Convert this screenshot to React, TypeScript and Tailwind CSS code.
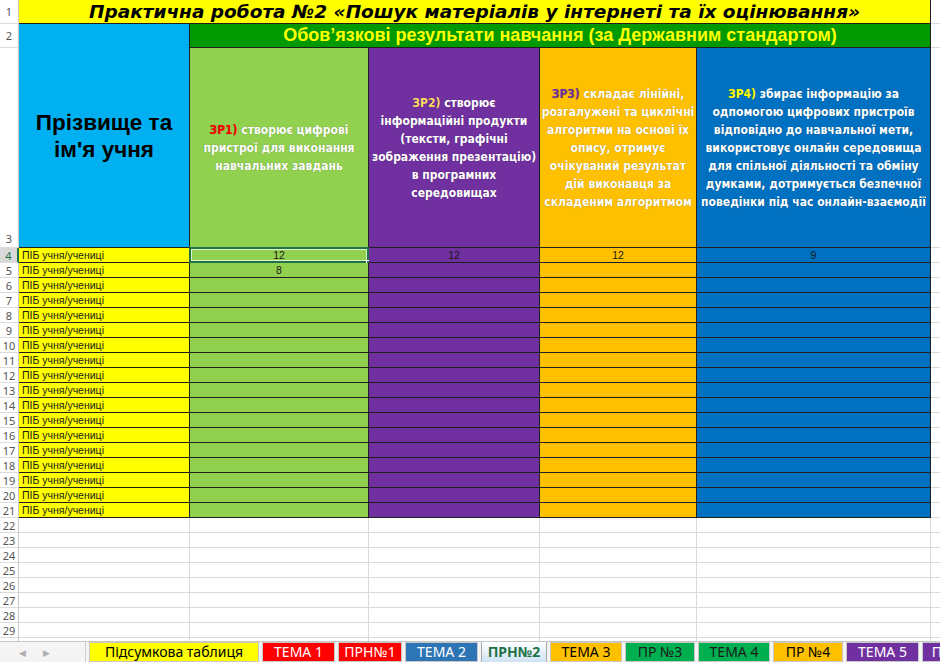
import React from "react";

type Head = {
  tag: string;
  tagColor: string;
  first: string;
  rest: string[];
  bg: string;
};

const heads: Head[] = [
  {
    tag: "ЗР1)",
    tagColor: "text-[#ff0000]",
    first: "створює цифрові",
    rest: ["пристрої для виконання", "навчальних завдань"],
    bg: "bg-[#92d050]",
  },
  {
    tag: "ЗР2)",
    tagColor: "text-[#ffd966]",
    first: "створює",
    rest: [
      "інформаційні продукти",
      "(тексти, графічні",
      "зображення презентацію)",
      "в програмних",
      "середовищах",
    ],
    bg: "bg-[#7030a0]",
  },
  {
    tag: "ЗР3)",
    tagColor: "text-[#7030a0]",
    first: "складає лінійні,",
    rest: [
      "розгалужені та циклічні",
      "алгоритми на основі їх",
      "опису, отримує",
      "очікуваний результат",
      "дій виконавця за",
      "складеним алгоритмом",
    ],
    bg: "bg-[#ffc000]",
  },
  {
    tag: "ЗР4)",
    tagColor: "text-[#ffff00]",
    first: "збирає інформацію за",
    rest: [
      "одпомогою цифрових пристроїв",
      "відповідно до навчальної мети,",
      "використовує онлайн середовища",
      "для спільної діяльності та обміну",
      "думками, дотримується безпечної",
      "поведінки під час онлайн-взаємодії",
    ],
    bg: "bg-[#0070c0]",
  },
];

const dataCols = [
  "bg-[#92d050]",
  "bg-[#7030a0]",
  "bg-[#ffc000]",
  "bg-[#0070c0]",
];

const scores: Record<number, string[]> = {
  4: ["12", "12", "12", "9"],
  5: ["8", "", "", ""],
};

const tabs = [
  { label: "Підсумкова таблиця", w: "w-[170px]", cls: "bg-[#ffff00] text-black" },
  { label: "ТЕМА 1", w: "w-[73px]", cls: "bg-[#ff0000] text-white" },
  { label: "ПРН№1", w: "w-[64px]", cls: "bg-[#ff0000] text-white" },
  { label: "ТЕМА 2", w: "w-[73px]", cls: "bg-[#2e75b6] text-white" },
  { label: "ПРН№2", w: "w-[66px]", cls: "active" },
  { label: "ТЕМА 3", w: "w-[72px]", cls: "bg-[#ffc000] text-black" },
  { label: "ПР №3", w: "w-[70px]", cls: "bg-[#00b050] text-[#1a1a1a]" },
  { label: "ТЕМА 4", w: "w-[72px]", cls: "bg-[#00b050] text-[#1a1a1a]" },
  { label: "ПР №4", w: "w-[70px]", cls: "bg-[#ffc000] text-black" },
  { label: "ТЕМА 5", w: "w-[73px]", cls: "bg-[#7030a0] text-white" },
  { label: "П", w: "w-[30px]", cls: "bg-[#7030a0] text-white" },
];

function RowHead({ n, bottom, selected }: { n: number | string; bottom?: boolean; selected?: boolean }) {
  return (
    <div
      className={`flex justify-center border-b border-[#dcdcdc] font-['Noto_Sans',sans-serif] text-[11px] leading-none ${
        bottom ? "items-end pb-[3px]" : "items-center"
      } ${
        selected
          ? "bg-[#d9d9d9] text-[#217346] border-r-2 border-r-[#217346]"
          : "bg-white text-[#555555] border-r border-r-[#c8c8c8]"
      }`}
    >
      {n}
    </div>
  );
}

function HeaderCell({ h }: { h: Head }) {
  return (
    <div
      className={`${h.bg} flex flex-col items-center justify-center border-r border-b border-[#1f1f1f] font-['DejaVu_Sans_Condensed','DejaVu_Sans',sans-serif] [font-stretch:condensed] font-bold text-[12px] leading-[18px] text-white text-center whitespace-nowrap [text-shadow:0_0_1px_rgba(0,0,0,0.35)]`}
    >
      <div>
        <span className={h.tagColor}>{h.tag}</span> {h.first}
      </div>
      {h.rest.map((l) => (
        <div key={l}>{l}</div>
      ))}
    </div>
  );
}

export default function App() {
  const dataRows = Array.from({ length: 18 }, (_, i) => i + 4);
  const emptyRows = Array.from({ length: 8 }, (_, i) => i + 22);

  return (
    <div className="w-[940px] h-[662px] flex flex-col bg-white overflow-hidden">
      <div className="flex-1 min-h-0 grid grid-cols-[19px_171px_179px_171px_157px_234px_1fr] grid-rows-[24px_24px_200px_repeat(26,15px)_1fr] overflow-hidden">
        {/* row 1: title */}
        <RowHead n={1} />
        <div className="col-span-5 bg-[#ffff00] border-r border-b border-[#1f1f1f] flex items-center justify-center font-['DejaVu_Sans',sans-serif] font-bold italic text-[18.5px] text-black whitespace-nowrap">
          Практична робота №2 «Пошук матеріалів у інтернеті та їх оцінювання»
        </div>
        <div className="border-b border-[#dcdcdc]" />

        {/* row 2: group caption */}
        <RowHead n={2} />
        <div className="row-span-2 bg-[#00b0f0] border-r border-b border-[#1f1f1f] flex items-center justify-center text-center font-['Liberation_Sans',Arial,sans-serif] font-bold text-[22.5px] leading-[27px] text-black">
          Прізвище та
          <br />
          ім'я учня
        </div>
        <div className="col-span-4 bg-[#009a00] border-r border-b border-[#1f1f1f] flex items-center justify-center font-['Liberation_Sans',Arial,sans-serif] font-bold text-[18px] text-[#ffff00] whitespace-nowrap">
          Обов’язкові результати навчання (за Державним стандартом)
        </div>
        <div className="border-b border-[#dcdcdc]" />

        {/* row 3: outcome headers */}
        <RowHead n={3} bottom />
        {heads.map((h) => (
          <HeaderCell key={h.tag} h={h} />
        ))}
        <div className="border-b border-[#dcdcdc]" />

        {/* rows 4-21: pupils */}
        {dataRows.map((r) => (
          <React.Fragment key={r}>
            <RowHead n={r} selected={r === 4} />
            <div className="bg-[#ffff00] border-r border-b border-[#1f1f1f] flex items-center pl-[3px] font-['Liberation_Sans',Arial,sans-serif] text-[10.5px] leading-none text-[#1a1a1a] whitespace-nowrap">
              ПІБ учня/учениці
            </div>
            {dataCols.map((bg, ci) => (
              <div
                key={bg}
                className={`${bg} relative border-r border-b border-[#1f1f1f] flex items-center justify-center font-['Liberation_Sans',Arial,sans-serif] text-[10.5px] leading-none text-[#1a1a1a]`}
              >
                {scores[r]?.[ci] ?? ""}
                {r === 4 && ci === 0 && (
                  <>
                    <div className="absolute -left-[1px] -top-[1px] -right-[1px] -bottom-[1px] border-2 border-[#217346]">
                      <div className="absolute inset-0 border border-white/70" />
                    </div>
                    <div className="absolute -right-[4px] -bottom-[4px] w-[6px] h-[6px] bg-[#217346] border border-white" />
                  </>
                )}
              </div>
            ))}
            <div className="border-b border-[#dcdcdc]" />
          </React.Fragment>
        ))}

        {/* rows 22-29: empty grid */}
        {emptyRows.map((r) => (
          <React.Fragment key={r}>
            <RowHead n={r} />
            <div className="border-r border-b border-[#dadada]" />
            <div className="border-r border-b border-[#dadada]" />
            <div className="border-r border-b border-[#dadada]" />
            <div className="border-r border-b border-[#dadada]" />
            <div className="border-r border-b border-[#dadada]" />
            <div className="border-b border-[#dadada]" />
          </React.Fragment>
        ))}
        <div className="border-r border-[#c8c8c8]" />
        <div className="border-r border-[#dadada]" />
        <div className="border-r border-[#dadada]" />
        <div className="border-r border-[#dadada]" />
        <div className="border-r border-[#dadada]" />
        <div className="border-r border-[#dadada]" />
        <div />
      </div>

      {/* sheet tabs */}
      <div className="h-[21px] shrink-0 flex items-stretch border-t border-[#c6c6c6] bg-[#f4f4f4] font-['Noto_Sans',sans-serif] text-[14px] leading-none overflow-hidden">
        <div className="w-[85px] shrink-0 flex items-center text-[#b0b0b0] text-[9px]">
          <span className="ml-[19px]">◀</span>
          <span className="ml-[17px]">▶</span>
        </div>
        <div className="flex gap-[3px] pl-[3px] border-l border-[#d0d0d0]">
          {tabs.map((t) =>
            t.cls === "active" ? (
              <div
                key={t.label}
                className={`${t.w} shrink-0 flex items-center justify-center bg-gradient-to-b from-white to-[#cfe2f3] border-x border-[#a8a8a8] text-[#217346] font-bold`}
              >
                {t.label}
              </div>
            ) : (
              <div
                key={t.label}
                className={`${t.w} ${t.cls} shrink-0 flex items-center justify-center border border-[#c8c8c8] whitespace-nowrap overflow-hidden`}
              >
                {t.label}
              </div>
            )
          )}
        </div>
      </div>
    </div>
  );
}
